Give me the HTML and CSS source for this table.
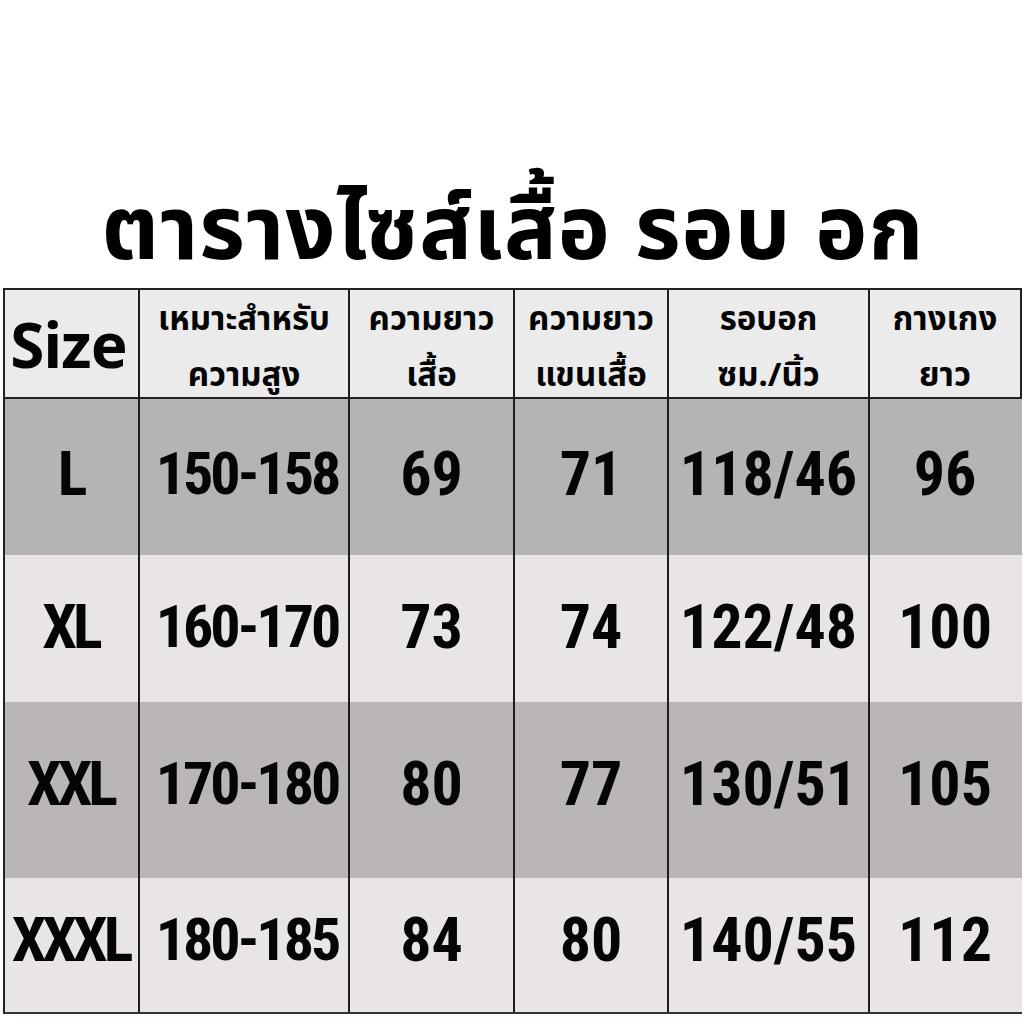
FILE: index.html
```html
<!DOCTYPE html>
<html lang="th">
<head>
<meta charset="utf-8">
<link rel="stylesheet" href="styles.css">
</head>
<body>
<div class="page">
  <h1 class="title">ตารางไซส์เสื้อ รอบ อก</h1>
  <div class="chart">
    <div class="cell head size">Size</div>
    <div class="cell head th">เหมาะสำหรับ<br>ความสูง</div>
    <div class="cell head th">ความยาว<br>เสื้อ</div>
    <div class="cell head th">ความยาว<br>แขนเสื้อ</div>
    <div class="cell head th">รอบอก<br>ซม./นิ้ว</div>
    <div class="cell head th last">กางเกง<br>ยาว</div>

    <div class="cell dark r1 sz">L</div>
    <div class="cell dark r1 num range">150-158</div>
    <div class="cell dark r1 num">69</div>
    <div class="cell dark r1 num">71</div>
    <div class="cell dark r1 num">118/46</div>
    <div class="cell dark r1 num last">96</div>

    <div class="cell light r2 sz">XL</div>
    <div class="cell light r2 num range">160-170</div>
    <div class="cell light r2 num">73</div>
    <div class="cell light r2 num">74</div>
    <div class="cell light r2 num">122/48</div>
    <div class="cell light r2 num last">100</div>

    <div class="cell dark2 r3 sz">XXL</div>
    <div class="cell dark2 r3 num range">170-180</div>
    <div class="cell dark2 r3 num">80</div>
    <div class="cell dark2 r3 num">77</div>
    <div class="cell dark2 r3 num">130/51</div>
    <div class="cell dark2 r3 num last">105</div>

    <div class="cell light r4 sz">XXXL</div>
    <div class="cell light r4 num range">180-185</div>
    <div class="cell light r4 num">84</div>
    <div class="cell light r4 num">80</div>
    <div class="cell light r4 num">140/55</div>
    <div class="cell light r4 num last">112</div>
  </div>
</div>
</body>
</html>
```
FILE: styles.css
```css
html, body {
  margin: 0;
  padding: 0;
  background: #ffffff;
}
.page {
  width: 1024px;
  height: 1024px;
  display: flex;
  flex-direction: column;
  align-items: flex-start;
}
.title {
  margin: 0;
  width: 1024px;
  height: 288px;
  display: flex;
  align-items: flex-end;
  justify-content: center;
  box-sizing: border-box;
  padding-bottom: 19px;
  padding-left: 2px;
  font-family: "Noto Sans", "Noto Sans Thai", sans-serif;
  font-weight: 700;
  font-size: 88px;
  line-height: 1;
  color: #000;
  letter-spacing: 1px;
  white-space: nowrap;
}
.chart {
  margin-left: 3px;
  display: grid;
  grid-template-columns: 135px 210px 165px 154px 201px 152px;
  grid-template-rows: 109px 156px 147px 176px 134px;
  border-top: 2px solid #222;
  border-left: 2px solid #222;
  border-bottom: 2px solid #333;
  box-sizing: border-box;
}
.cell {
  display: flex;
  align-items: center;
  justify-content: center;
  text-align: center;
  border-right: 2px solid #1e1e1e;
  color: #050505;
  font-weight: 700;
  box-sizing: border-box;
  white-space: nowrap;
}
.cell.last {
  border-right-color: transparent;
}
.head {
  background: #ebebeb;
  border-bottom: 2px solid #222;
}
.head.last {
  border-right: 2px solid #222;
}
.size {
  font-family: "Noto Sans", sans-serif;
  font-size: 62px;
  letter-spacing: -1px;
  padding-right: 6px;
}
.th {
  font-family: "Noto Sans", "Noto Sans Thai", sans-serif;
  font-size: 33px;
  line-height: 56px;
  padding-top: 4px;
}
.dark { background: #b4b4b4; }
.dark2 { background: #bab6b8; }
.light { background: #e9e5e7; }
.num, .sz {
  font-family: "Liberation Sans Narrow", "Roboto Condensed", "Liberation Sans", sans-serif;
  font-size: 62px;
}
.range {
  letter-spacing: -3px;
  font-size: 60px;
  padding-left: 6px;
}
.sz {
  letter-spacing: -4px;
  padding-right: 2px;
}
.r1 { padding-bottom: 8px; }
.r2 { padding-bottom: 4px; }
.r3 { padding-bottom: 14px; }
.r4 { padding-bottom: 12px; }
```
